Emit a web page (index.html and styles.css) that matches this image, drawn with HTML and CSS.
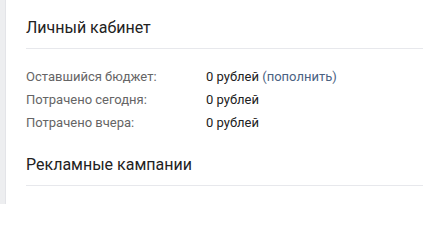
FILE: index.html
```html
<!DOCTYPE html>
<html lang="ru">
<head>
<meta charset="utf-8">
<link rel="stylesheet" href="styles.css">
</head>
<body>
<div class="page">
  <div class="side"></div>
  <div class="main">
    <div class="section">
      <h2 class="title">Личный кабинет</h2>
    </div>
    <div class="stats">
      <div class="row"><span class="label">Оставшийся бюджет:</span><span class="value">0 рублей <a class="link">(пополнить)</a></span></div>
      <div class="row"><span class="label">Потрачено сегодня:</span><span class="value">0 рублей</span></div>
      <div class="row"><span class="label">Потрачено вчера:</span><span class="value">0 рублей</span></div>
    </div>
    <div class="section">
      <h2 class="title">Рекламные кампании</h2>
    </div>
  </div>
</div>
</body>
</html>
```
FILE: styles.css
```css
html, body {
  margin: 0;
  padding: 0;
  background: #ffffff;
}
body {
  font-family: Roboto, "Noto Sans", sans-serif;
  width: 423px;
  height: 204px;
  overflow: hidden;
}
.page {
  display: flex;
  height: 204px;
  align-items: stretch;
}
.side {
  width: 5px;
  background: #edeef0;
  border-right: 1px solid #e3e4e8;
  flex: none;
}
.main {
  flex: 1;
  padding-left: 20px;
}
.section {
  border-bottom: 1px solid #e7e8ec;
  padding-top: 18px;
  height: 30px;
}
.title {
  margin: 0;
  font-size: 16px;
  font-weight: 400;
  color: #222222;
  line-height: 20px;
}
.stats {
  padding: 16px 0 3px;
  display: flex;
  flex-direction: column;
}
.row {
  display: flex;
  font-size: 13px;
  line-height: 23px;
}
.label {
  width: 180px;
  color: #656565;
}
.value {
  color: #222222;
}
.link {
  color: #4a6282;
}
```
